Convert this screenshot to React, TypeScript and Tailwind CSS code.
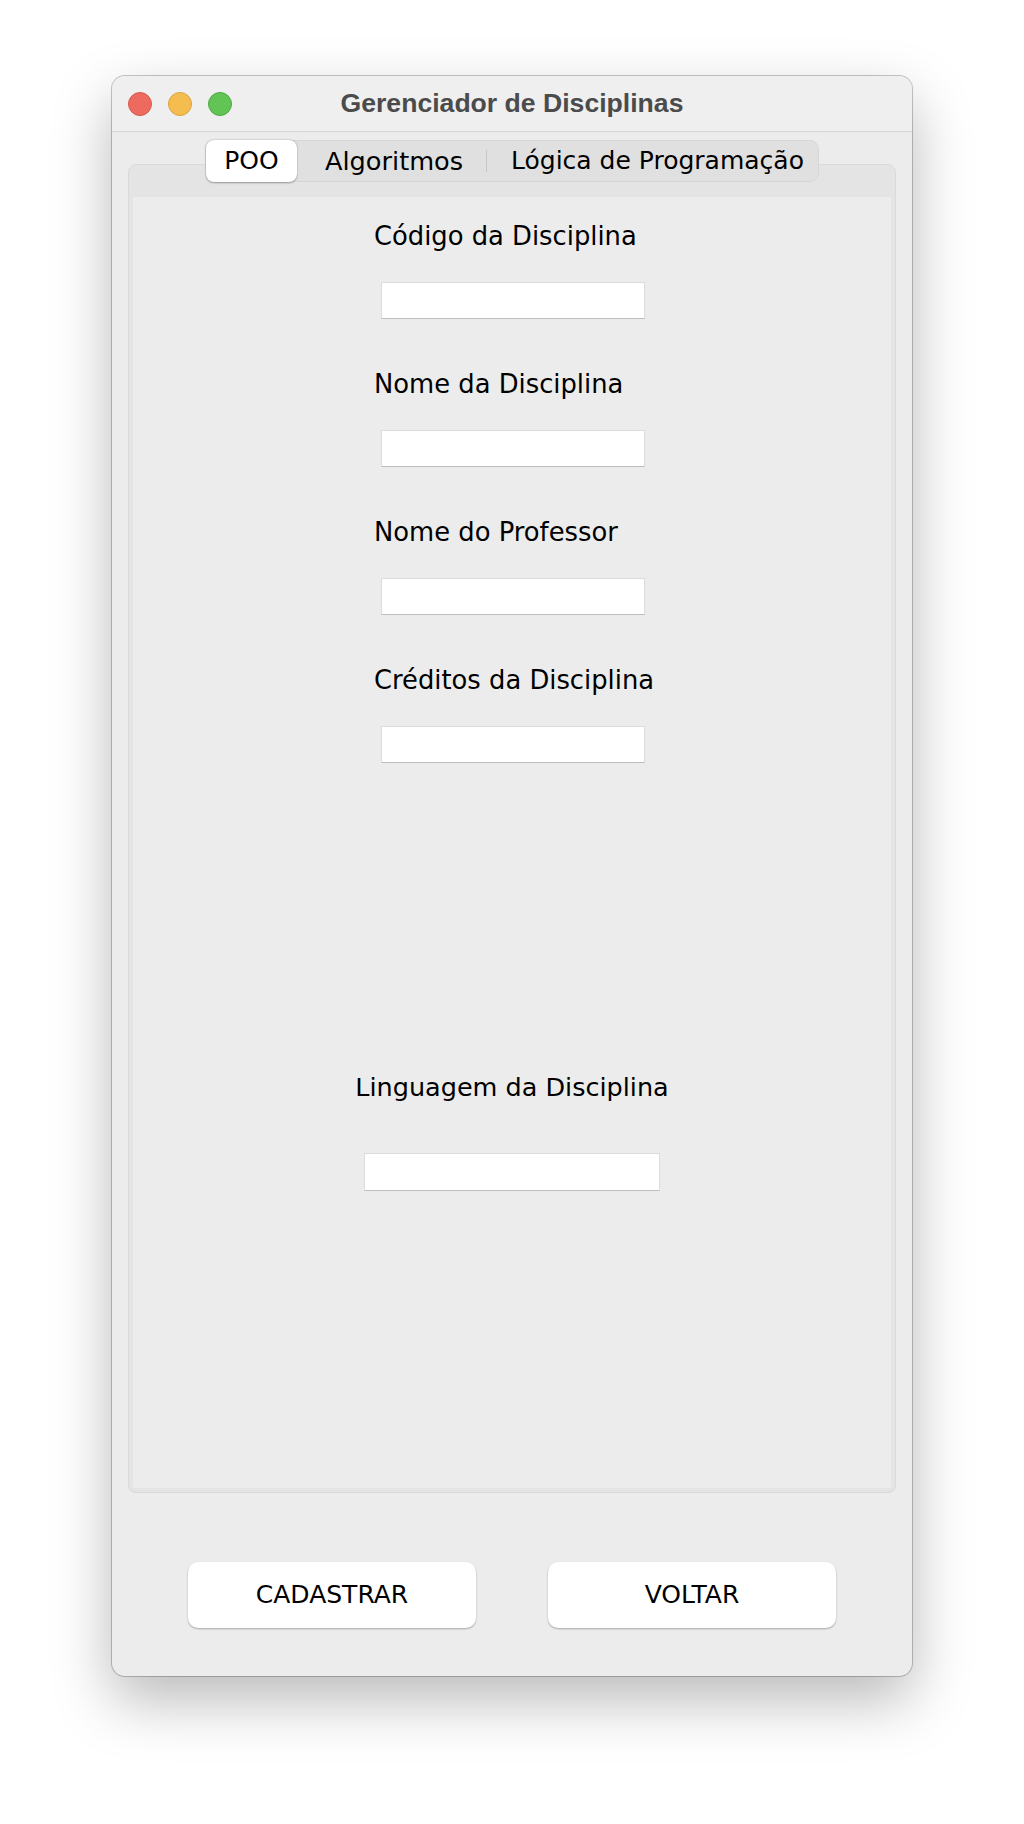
import React from "react";

const labelFont = { fontFamily: '"DejaVu Sans", "Noto Sans", sans-serif' };

function Field({ label }: { label: string }) {
  return (
    <div className="ml-[241px] flex flex-col items-start">
      <div className="h-[30px] text-[25.8px] leading-[30px] text-black whitespace-nowrap">{label}</div>
      <div className="mt-[31px] ml-[7px] h-[37px] w-[264px] bg-white border border-[#dcdcdc] border-b-[#bdbdbd]" />
    </div>
  );
}

export default function App() {
  // campos do formulário
  const campos = ["Código da Disciplina", "Nome da Disciplina", "Nome do Professor", "Créditos da Disciplina"];

  return (
    <div className="min-h-[1824px] bg-white pt-[76px]" style={labelFont}>
      <div className="mx-auto w-[800px] rounded-[13px] bg-[#ececec] shadow-[0_24px_60px_rgba(0,0,0,0.28),0_0_0_1px_rgba(0,0,0,0.22)] overflow-hidden">
        {/* barra de título */}
        <div className="grid h-[56px] grid-cols-[1fr_auto_1fr] items-center border-b border-[#d5d5d5] bg-[#efefef]">
          <div className="flex items-center gap-[16px] pl-[16px]">
            <span className="h-[24px] w-[24px] rounded-full bg-[#ee6a5f] border border-[#d35b50]" />
            <span className="h-[24px] w-[24px] rounded-full bg-[#f5bd4f] border border-[#d9a33f]" />
            <span className="h-[24px] w-[24px] rounded-full bg-[#61c454] border border-[#50a845]" />
          </div>
          <div
            className="text-[26.6px] font-bold text-[#4b4b4b]"
            style={{ fontFamily: '"Liberation Sans", Arial, sans-serif' }}
          >
            Gerenciador de Disciplinas
          </div>
          <div />
        </div>

        {/* conteúdo */}
        <div className="px-[16px] pt-[8px] pb-[48px]">
          {/* abas */}
          <div className="relative z-10 flex justify-center">
            <div className="flex h-[42px] items-center rounded-[9px] border border-[#d6d6d6] bg-[#e0e0e0] text-[25px] text-black">
              <div className="flex h-[42px] w-[91px] items-center justify-center rounded-[8px] bg-white shadow-[0_0.5px_2px_rgba(0,0,0,0.35)]">
                POO
              </div>
              <div className="flex w-[189px] items-center pl-[28px] text-[25.6px]">Algoritmos</div>
              <div className="h-[22px] w-px bg-[#c6c6c6]" />
              <div className="flex w-[331px] items-center pl-[24px] whitespace-nowrap">Lógica de Programação</div>
            </div>
          </div>

          {/* painel */}
          <div className="-mt-[18px] flex h-[1329px] flex-col rounded-[8px] border border-[#d9d9d9] bg-[#e4e4e4] px-[4px] pt-[32px] pb-[4px]">
            <div className="flex flex-1 flex-col bg-[#ececec] pt-[24px]">
              {campos.map((c, i) => (
                <div key={c} className={i < campos.length - 1 ? "mb-[50px]" : ""}>
                  <Field label={c} />
                </div>
              ))}

              <div className="mt-[309px] flex flex-col items-center">
                <div className="h-[30px] text-[25.5px] leading-[30px] text-black">Linguagem da Disciplina</div>
                <div className="mt-[51px] h-[38px] w-[296px] bg-white border border-[#dcdcdc] border-b-[#bdbdbd]" />
              </div>
            </div>
          </div>

          {/* botões */}
          <div className="mt-[69px] flex justify-center gap-[72px]">
            <button className="h-[66px] w-[288px] rounded-[10px] bg-white text-[25px] text-black shadow-[0_1px_2px_rgba(0,0,0,0.3)]">
              CADASTRAR
            </button>
            <button className="h-[66px] w-[288px] rounded-[10px] bg-white text-[25px] text-black shadow-[0_1px_2px_rgba(0,0,0,0.3)]">
              VOLTAR
            </button>
          </div>
        </div>
      </div>
    </div>
  );
}
